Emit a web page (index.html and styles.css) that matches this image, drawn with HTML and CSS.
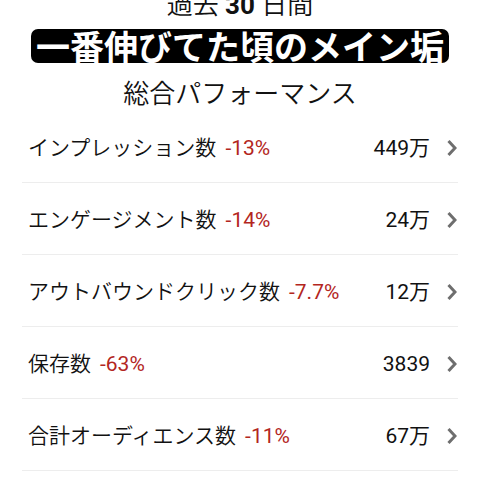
FILE: index.html
```
<!DOCTYPE html>
<html lang="ja">
<head>
  <meta charset="UTF-8" />
  <title>総合パフォーマンス</title>
  <link rel="stylesheet" href="styles.css">
</head>
<body>

<div class="period">過去 <b>30</b> 日間</div>

<div class="banner-wrap">
  <span class="banner">一番伸びてた頃のメイン垢</span>
</div>

<h2 class="title">総合パフォーマンス</h2>

<ul class="stats">
  <li class="row">
    <span class="label">インプレッション数</span>
    <span class="pct">-13%</span>
    <span class="value">449万</span>
    <svg class="chev" viewBox="0 0 11 18"><path d="M2.5 2 L9 9 L2.5 16" /></svg>
  </li>
  <li class="row">
    <span class="label">エンゲージメント数</span>
    <span class="pct">-14%</span>
    <span class="value">24万</span>
    <svg class="chev" viewBox="0 0 11 18"><path d="M2.5 2 L9 9 L2.5 16" /></svg>
  </li>
  <li class="row">
    <span class="label">アウトバウンドクリック数</span>
    <span class="pct">-7.7%</span>
    <span class="value">12万</span>
    <svg class="chev" viewBox="0 0 11 18"><path d="M2.5 2 L9 9 L2.5 16" /></svg>
  </li>
  <li class="row">
    <span class="label">保存数</span>
    <span class="pct">-63%</span>
    <span class="value">3839</span>
    <svg class="chev" viewBox="0 0 11 18"><path d="M2.5 2 L9 9 L2.5 16" /></svg>
  </li>
  <li class="row">
    <span class="label">合計オーディエンス数</span>
    <span class="pct">-11%</span>
    <span class="value">67万</span>
    <svg class="chev" viewBox="0 0 11 18"><path d="M2.5 2 L9 9 L2.5 16" /></svg>
  </li>
</ul>

</body>
</html>
```

FILE: styles.css
```
* {
  margin: 0;
  padding: 0;
  box-sizing: border-box;
}

body {
  font-family: Roboto, 'Noto Sans CJK JP', sans-serif;
  font-weight: 350;
  background-color: #fff;
  color: #111;
  overflow: hidden;
}

.period {
  margin-top: -8px;
  text-align: center;
  font-size: 26px;
  line-height: 26px;
}

.period b {
  font-weight: bold;
}

.banner-wrap {
  margin-top: 11px;
  text-align: center;
  height: 34px;
}

.banner {
  display: inline-block;
  background-color: #000;
  color: #fff;
  font-family: 'Noto Sans CJK JP', sans-serif;
  font-weight: bold;
  font-size: 34px;
  line-height: 34px;
  height: 34px;
  padding: 0 5px;
  border-radius: 7px;
}

.title {
  margin-top: 18px;
  margin-bottom: 4px;
  text-align: center;
  font-weight: 350;
  font-size: 26px;
  line-height: 26px;
}

.stats {
  list-style: none;
  margin: 0 22px;
}

.row {
  display: flex;
  align-items: center;
  height: 72px;
  padding: 3px 1px 0 6px;
  border-bottom: 1px solid #ededed;
  font-size: 21px;
  line-height: 28px;
}

.pct {
  margin-left: 9px;
  color: #b3261e;
  font-weight: 400;
}

.value {
  margin-left: auto;
  font-weight: 400;
}

.chev {
  width: 11px;
  height: 18px;
  margin-left: 16px;
  fill: none;
  stroke: #6e6e6e;
  stroke-width: 3;
}
```
